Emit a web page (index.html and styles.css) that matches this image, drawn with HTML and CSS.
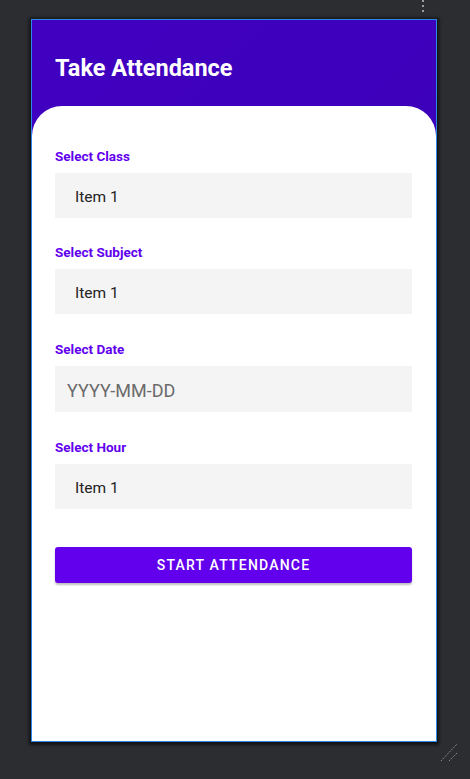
FILE: index.html
```html
<!DOCTYPE html>
<html lang="en">
<head>
    <meta charset="UTF-8">
    <meta name="viewport" content="width=device-width, initial-scale=1.0">
    <title>Take Attendance</title>
    <link rel="stylesheet" href="styles.css">
</head>
<body>
    <svg class="dots" width="4" height="14" viewBox="0 0 4 14">
        <rect x="1" y="0" width="2" height="2" fill="#9a9ca0"/>
        <rect x="1" y="5" width="2" height="2" fill="#9a9ca0"/>
        <rect x="1" y="10" width="2" height="2" fill="#9a9ca0"/>
    </svg>
    <div class="device">
        <div class="header">
            <h1>Take Attendance</h1>
        </div>
        <div class="card">
            <div class="field first">
                <label>Select Class</label>
                <div class="select">Item 1</div>
            </div>
            <div class="field">
                <label>Select Subject</label>
                <div class="select">Item 1</div>
            </div>
            <div class="field wide">
                <label>Select Date</label>
                <input type="text" class="date" placeholder="YYYY-MM-DD">
            </div>
            <div class="field wide">
                <label>Select Hour</label>
                <div class="select">Item 1</div>
            </div>
            <button class="start">Start Attendance</button>
        </div>
    </div>
    <svg class="resize" width="20" height="24" viewBox="0 0 20 24">
        <line x1="1" y1="21" x2="17" y2="4" stroke="#8a8c90" stroke-width="1" stroke-dasharray="1.5 1"/>
        <line x1="9" y1="21" x2="17" y2="13" stroke="#8a8c90" stroke-width="1" stroke-dasharray="1.5 1"/>
    </svg>
</body>
</html>
```

FILE: styles.css
```css
body {
    margin: 0;
    height: 779px;
    background-color: #2b2d30;
    font-family: Roboto, "Noto Sans", sans-serif;
    position: relative;
    overflow: hidden;
}
.dots {
    position: absolute;
    top: 0;
    left: 421px;
}
.resize {
    position: absolute;
    left: 440px;
    top: 740px;
}
.device {
    margin: 19px 0 0 31px;
    width: 404px;
    height: 721px;
    border: 1px solid #2d86e8;
    box-shadow: 0 1px 3px 2px rgba(0,0,0,0.6);
    background: linear-gradient(135deg, #4100c0, #3800b4);
    display: flex;
    flex-direction: column;
}
.header {
    height: 86px;
    padding: 34px 0 0 23px;
    box-sizing: border-box;
}
h1 {
    margin: 0;
    color: white;
    font-size: 23.5px;
    line-height: 28px;
    font-weight: 700;
}
.card {
    flex: 1;
    background-color: white;
    border-radius: 30px 30px 0 0;
    padding: 42px 24px 0 23px;
}
.field {
    margin-top: 26px;
}
.field.first {
    margin-top: 0;
}
.field.wide {
    margin-top: 27px;
}
label {
    display: block;
    color: #6200ee;
    font-size: 13.5px;
    line-height: 16px;
    font-weight: 700;
    margin-bottom: 9px;
}
.select {
    height: 45px;
    box-sizing: border-box;
    padding: 14px 0 0 20px;
    background-color: #f4f4f4;
    color: #222;
    font-size: 15.5px;
    line-height: 20px;
}
.date {
    display: block;
    width: 100%;
    height: 46px;
    box-sizing: border-box;
    padding: 2px 12px 0;
    border: none;
    outline: none;
    background-color: #f4f4f4;
    font-family: Roboto, sans-serif;
    font-size: 18px;
}
.date::placeholder {
    color: #6b6b6b;
}
.start {
    display: block;
    width: 100%;
    height: 36px;
    margin-top: 38px;
    border: none;
    border-radius: 3px;
    background-color: #6200ee;
    color: white;
    font-family: Roboto, sans-serif;
    font-size: 14px;
    font-weight: 500;
    letter-spacing: 1.2px;
    text-transform: uppercase;
    box-shadow: 0 2px 2px rgba(0,0,0,0.25);
}
```
